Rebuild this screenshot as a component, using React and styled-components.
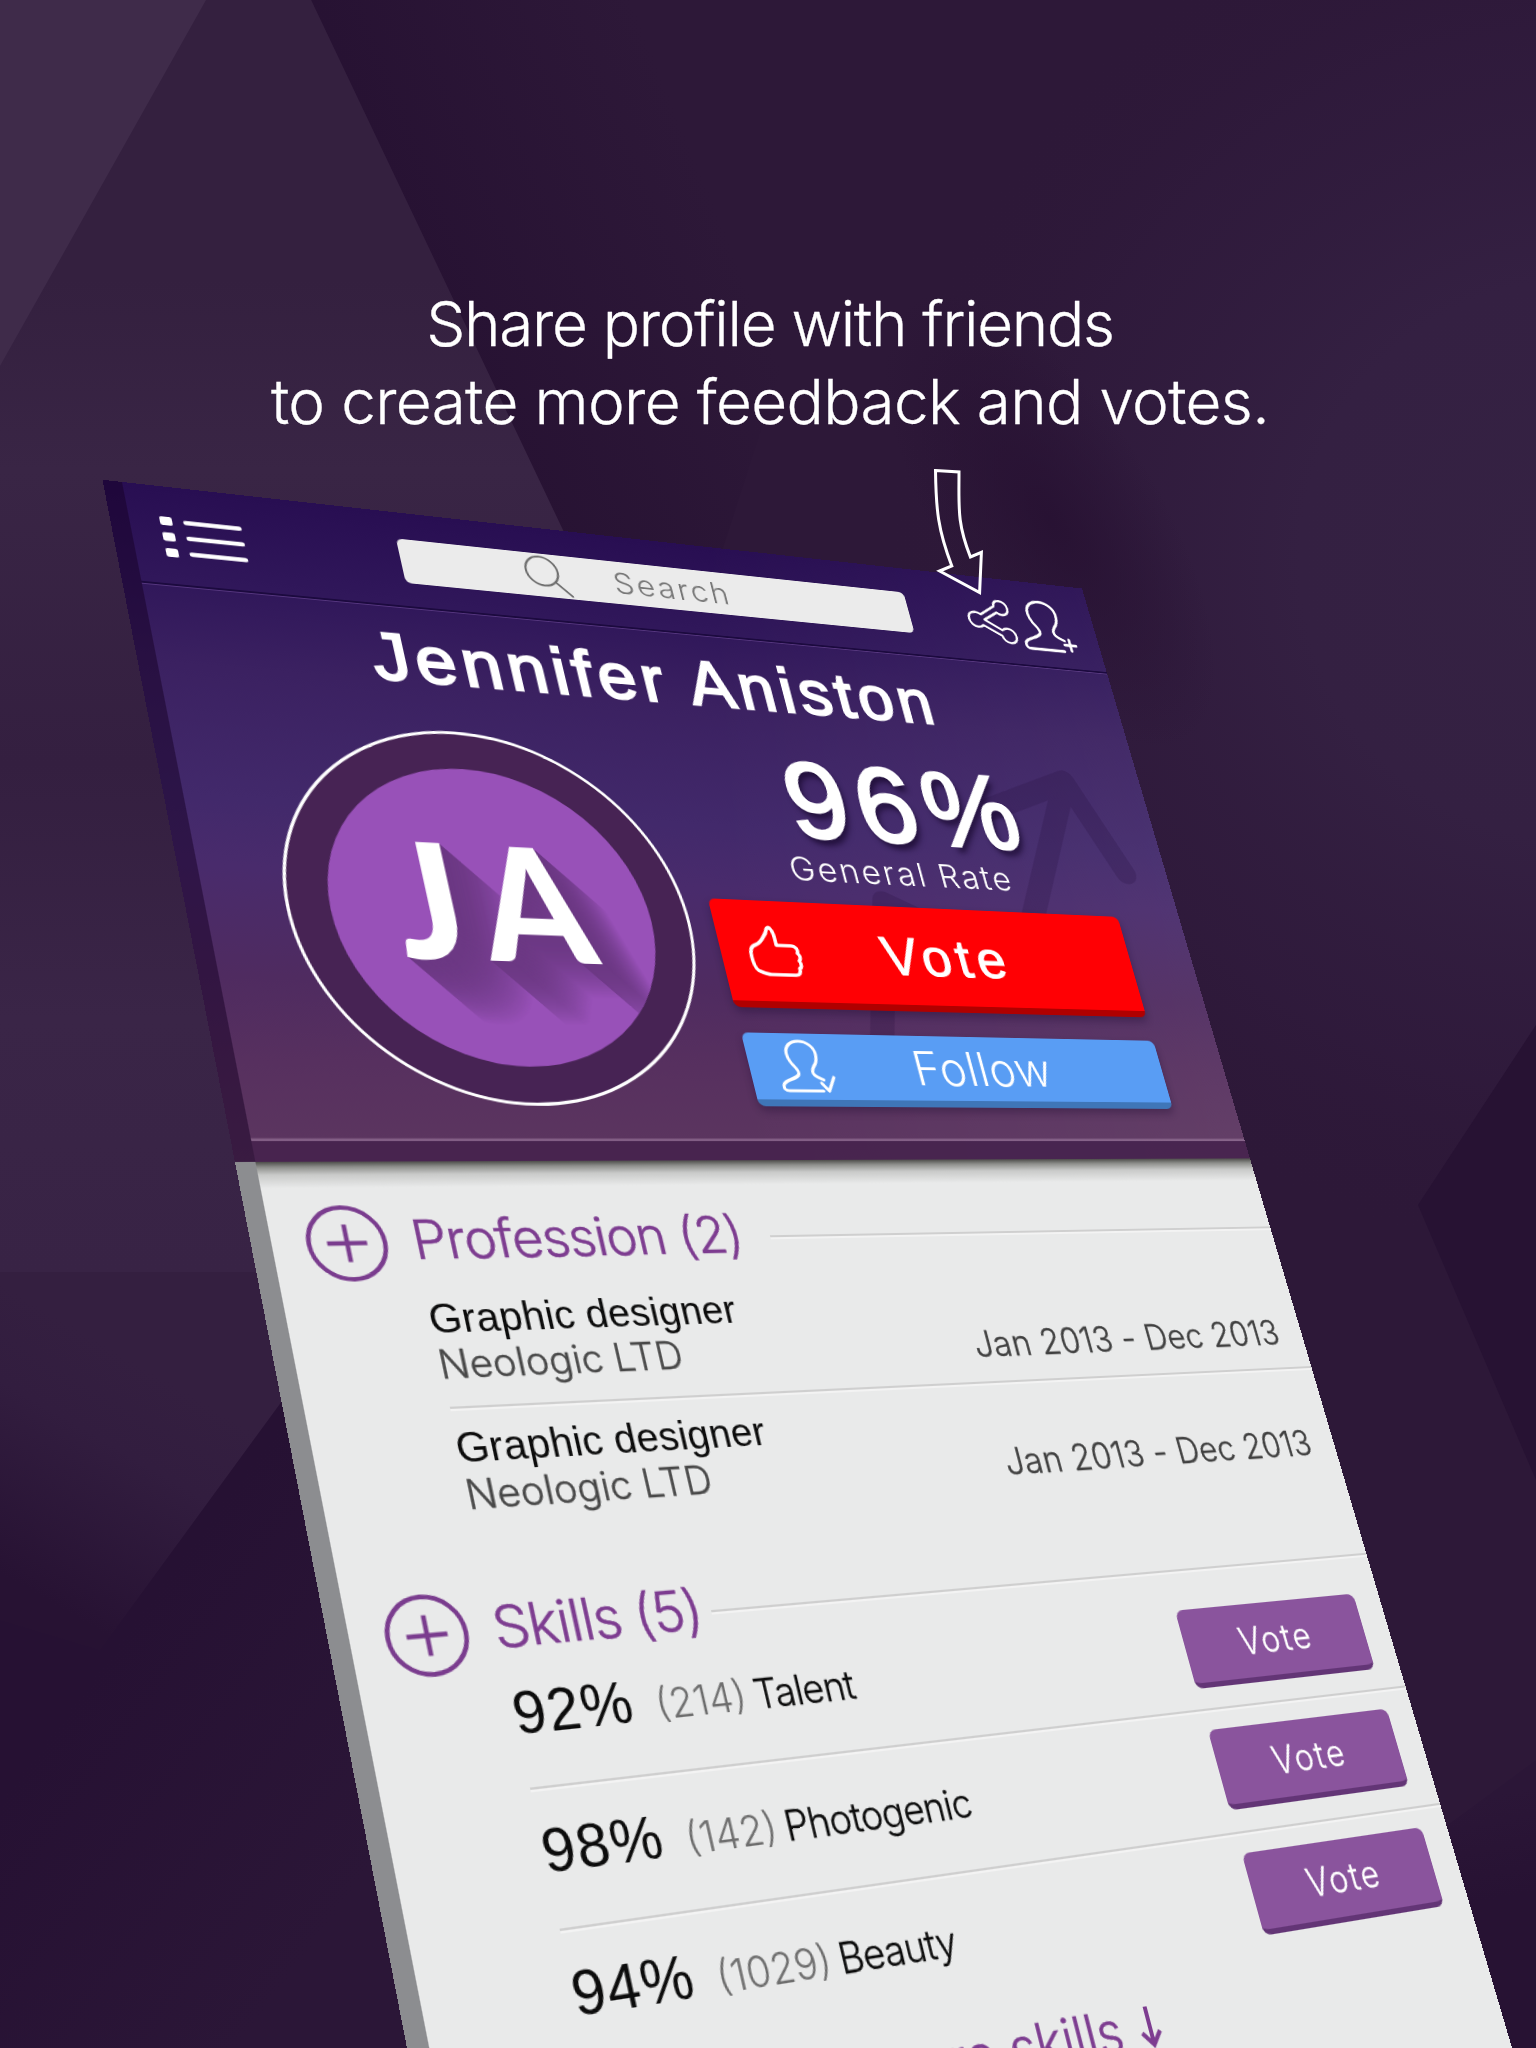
import React from 'react';
import styled, { createGlobalStyle, css } from 'styled-components';

const GlobalStyle = createGlobalStyle`
  *, *::before, *::after { box-sizing: border-box; }
  body { margin: 0; background: #2d1838; }
`;

const regular = css`
  font-family: "Liberation Sans", Arial, sans-serif;
  font-weight: 400;
`;
const light = css`
  font-family: Inter, "Liberation Sans", sans-serif;
  font-weight: 300;
`;

/* Projects a flat w x h sheet on to four corners: TL, TR, BR, BL. */
function project(w, h, [p0, p1, p2, p3]) {
  const dx1 = p1[0] - p2[0];
  const dx2 = p3[0] - p2[0];
  const dx3 = p0[0] - p1[0] + p2[0] - p3[0];
  const dy1 = p1[1] - p2[1];
  const dy2 = p3[1] - p2[1];
  const dy3 = p0[1] - p1[1] + p2[1] - p3[1];
  const den = dx1 * dy2 - dx2 * dy1;
  const g = (dx3 * dy2 - dx2 * dy3) / den;
  const k = (dx1 * dy3 - dx3 * dy1) / den;
  const m = [
    (p1[0] - p0[0] + g * p1[0]) / w, (p1[1] - p0[1] + g * p1[1]) / w, 0, g / w,
    (p3[0] - p0[0] + k * p3[0]) / h, (p3[1] - p0[1] + k * p3[1]) / h, 0, k / h,
    0, 0, 1, 0,
    p0[0], p0[1], 0, 1,
  ];
  return `matrix3d(${m.map((n) => n.toFixed(9)).join(',')})`;
}

const EDGE = 17;
const SHEET = project(1000, 1591, [[122, 482], [1082, 588.5], [1522.5, 2083.5], [478.7, 2300]]);

const longShadow = (steps) =>
  Array.from({ length: steps }, (_, i) => {
    const t = i / steps;
    const mix = (a, b) => Math.round(a + (b - a) * t * t);
    return `${i + 1}px ${i + 1}px 0 rgb(${mix(108, 152)},${mix(56, 81)},${mix(132, 184)})`;
  }).join(',');

const Stage = styled.main`
  width: 1536px;
  height: 2048px;
  overflow: hidden;
  display: grid;
  grid-template: 2048px / 1536px;
  & > * { grid-area: 1 / 1; }
`;

const Backdrop = styled.svg`
  display: block;
  width: 1536px;
  height: 2048px;
`;

const Promo = styled.div`
  z-index: 2;
  padding: 285px 0 0 4px;
`;

const Headline = styled.h1`
  ${light}
  margin: 0;
  color: #fff;
  font-size: 62px;
  line-height: 78px;
  text-align: center;
  -webkit-text-stroke: 0.3px #fff;
`;

const HeadlineRow = styled.span`
  display: block;
  letter-spacing: ${(p) => p.$ls}px;
`;

const Pointer = styled.svg`
  display: block;
  width: 56px;
  height: 134px;
  margin: 24px 0 0 926px;
`;

const Sheet = styled.section`
  z-index: 1;
  width: ${1000 + EDGE}px;
  height: 1591px;
  transform-origin: 0 0;
  transform: ${SHEET} translateX(-${EDGE}px);
`;

const Header = styled.header`
  position: relative;
  height: 662px;
  border-left: ${EDGE}px solid rgba(22, 0, 36, 0.5);
  box-shadow:
    inset 0 -19px 0 rgba(64, 28, 72, 0.88),
    inset 0 -21.5px 0 rgba(255, 225, 255, 0.24);
  background:
    linear-gradient(100deg, rgba(255, 255, 255, 0) 50%, rgba(255, 255, 255, 0.05) 100%) border-box,
    linear-gradient(180deg, #280e52 0, #30175a 15%, #3b2161 28%, #42296b 48%, #492b6c 58%, #4f2b60 74%, #57305f 86%, #5c365f 100%) border-box;
`;

const Trend = styled.svg`
  position: absolute;
  left: 590px;
  top: 215px;
  width: 400px;
  height: 340px;
`;

const NavBar = styled.nav`
  height: 104px;
  padding: 3px 0 0 27px;
  display: flex;
  align-items: center;
  border-bottom: 2px solid #1c0a3f;
  box-shadow: 0 1px 0 rgba(130, 90, 170, 0.45);
`;

const Icon = styled.svg`
  display: block;
  flex: none;
  width: ${(p) => p.$w}px;
  height: ${(p) => p.$h}px;
  margin-left: ${(p) => p.$ml || 0}px;
  fill: none;
  stroke: ${(p) => p.$color || '#fff'};
  stroke-width: ${(p) => p.$stroke || 0};
  stroke-linecap: round;
  stroke-linejoin: round;
  overflow: visible;
`;

const SearchBox = styled.div`
  width: 533px;
  height: 48px;
  margin-left: 145px;
  padding-left: 121px;
  display: flex;
  align-items: center;
  border-radius: 6px;
  background: #ebebeb;
`;

const SearchText = styled.span`
  ${light}
  margin-left: 45px;
  color: #777;
  font-size: 33px;
  line-height: 40px;
  letter-spacing: 2.6px;
`;

const Name = styled.h2`
  ${regular}
  margin: 15px 0 0 197px;
  color: #fff;
  font-size: 70px;
  line-height: 80px;
  letter-spacing: 5.3px;
  white-space: nowrap;
  -webkit-text-stroke: 2.4px #fff;
`;

const Hero = styled.div`
  position: relative;
  display: flex;
  padding: 23px 0 0 70px;
`;

const Avatar = styled.div`
  flex: none;
  width: 379px;
  height: 376px;
  margin-top: 11px;
  display: flex;
  align-items: center;
  justify-content: center;
  border: 3px solid #fff;
  border-radius: 50%;
  background: #472354;
`;

const Disc = styled.div`
  width: 301px;
  height: 299px;
  padding: 0 0 33px 15px;
  overflow: hidden;
  display: flex;
  align-items: center;
  justify-content: center;
  border-radius: 50%;
  background: #9851b8;
`;

const Monogram = styled.span`
  color: #fff;
  font-family: Lato, sans-serif;
  font-weight: 900;
  font-size: 161px;
  line-height: 1;
  letter-spacing: 18px;
  transform: scaleX(0.92);
  text-shadow: ${longShadow(62)};
`;

const Stats = styled.div`
  width: 452px;
  margin-left: 24px;
`;

const Rate = styled.div`
  ${regular}
  padding-left: 109px;
  color: #fff;
  font-size: 118px;
  line-height: 118px;
  letter-spacing: 10px;
  white-space: nowrap;
  -webkit-text-stroke: 3.2px #fff;
  text-shadow: 3px 7px 6px rgba(20, 5, 40, 0.75);
`;

const RateLabel = styled.div`
  ${light}
  padding-left: 94px;
  margin: -5px 0 15px;
  color: #fff;
  font-size: 36px;
  line-height: 44px;
  letter-spacing: 2.6px;
  white-space: nowrap;
`;

const Action = styled.button`
  width: 452px;
  height: ${(p) => p.$h}px;
  margin: 0 0 26px;
  padding: 0 0 0 29px;
  display: flex;
  align-items: center;
  border: 0;
  border-bottom: 7px solid ${(p) => p.$edge};
  border-radius: 7px;
  background: ${(p) => p.$fill};
  box-shadow: 0 5px 9px rgba(20, 5, 40, 0.3);
  color: #fff;
`;

const VoteLabel = styled.span`
  ${regular}
  margin-left: 88px;
  font-size: 58px;
  letter-spacing: 6.3px;
  -webkit-text-stroke: 1.2px #fff;
`;

const FollowLabel = styled.span`
  ${light}
  margin-left: 86px;
  font-size: 49px;
  letter-spacing: 0.8px;
`;

const Body = styled.div`
  height: 929px;
  padding-top: 39.5px;
  border-left: ${EDGE}px solid #8c8d90;
  background: linear-gradient(180deg, #4d4d4a 0, #8f908d 5px, #c9cac9 12px, #e9eaea 24px) border-box;
  background-color: #e9eaea;
`;

const SectionHead = styled.div`
  height: 70px;
  margin: ${(p) => p.$mt || 0}px 0 ${(p) => p.$mb || 0}px;
  padding-left: 29px;
  display: flex;
  align-items: center;
`;

const Title = styled.h3`
  ${light}
  margin: 0 0 0 21.5px;
  padding-bottom: 4px;
  color: #7d3c90;
  font-size: 49px;
  line-height: 56px;
  letter-spacing: -1px;
  white-space: nowrap;
  -webkit-text-stroke: 0.5px #7d3c90;
`;

const Rule = styled.div`
  flex: 1;
  height: 2px;
  margin-left: ${(p) => p.$ml}px;
  background: #cfcfcf;
  box-shadow: 0 2px 0 #f3f3f3;
`;

const divider = css`
  border-bottom: ${(p) => (p.$last ? 0 : 2)}px solid #cfcfcf;
  box-shadow: ${(p) => (p.$last ? 'none' : '0 2px 0 #f3f3f3')};
`;

const JobRow = styled.div`
  height: 115px;
  margin-left: 122px;
  padding: 14.5px 27px 0 0;
  display: flex;
  justify-content: space-between;
  align-items: flex-start;
  ${divider}
`;

const JobText = styled.div`
  margin-left: -2px;
`;

const JobTitle = styled.div`
  ${regular}
  color: #0c0c0c;
  font-size: 36.5px;
  line-height: 41px;
  letter-spacing: 0.2px;
`;

const Company = styled.div`
  ${light}
  color: #484848;
  font-size: 35px;
  line-height: 41px;
  letter-spacing: 0.1px;
  -webkit-text-stroke: 0.4px #484848;
`;

const Period = styled.div`
  ${light}
  align-self: flex-start;
  margin-top: 42px;
  color: #404040;
  font-size: 35px;
  line-height: 41px;
  letter-spacing: 0.3px;
  white-space: nowrap;
  -webkit-text-stroke: 0.4px #404040;
`;

const SkillRow = styled.div`
  height: 114.5px;
  margin-left: 122px;
  padding-right: 29px;
  display: flex;
  justify-content: space-between;
  align-items: flex-start;
  ${divider}
`;

const SkillText = styled.div`
  display: flex;
  align-items: baseline;
  margin-left: -1px;
  padding-top: 21px;
  line-height: 60px;
  white-space: nowrap;
`;

const Percent = styled.span`
  ${regular}
  min-width: 123px;
  color: #0c0c0c;
  font-size: 50px;
  letter-spacing: 1.2px;
`;

const Count = styled.span`
  ${light}
  color: #6e6e6e;
  font-size: 35px;
`;

const SkillName = styled.span`
  ${light}
  margin-left: 7.5px;
  color: #0c0c0c;
  font-size: 35px;
  letter-spacing: -0.7px;
  -webkit-text-stroke: 0.3px #0c0c0c;
`;

const SmallVote = styled.button`
  ${light}
  width: 203px;
  height: 75px;
  margin-top: 18px;
  padding: 0;
  border: 0;
  border-bottom: 5px solid #633576;
  border-radius: 8px;
  background: #8a549d;
  color: #fff;
  font-size: 35px;
  letter-spacing: 2.3px;
  -webkit-text-stroke: 0.3px #fff;
`;

const More = styled.div`
  ${light}
  margin-top: 9px;
  padding-right: 3px;
  display: flex;
  justify-content: center;
  align-items: center;
  color: #7d3c90;
  font-size: 49px;
  line-height: 60px;
  -webkit-text-stroke: 0.5px #7d3c90;
`;

const PERSON = 'M41 52H6C2 52 1 50 1.5 47C2.5 41 14 41 19 36C21 34 20 31 17 27C13 22 12 18 12 14C12 6 19 1 27 1C36 1 42 7 42 14C42 19 40 24 37 27C34 31 34 34 36 36C38 38 41 39 44 40.5';

const PlusCircle = () => (
  <Icon $w={69} $h={69} viewBox="0 0 67 67" $color="#7a3c8e" $stroke={3.8}>
    <circle cx="33.5" cy="33.5" r="31.5" />
    <path d="M33.5 17V50M17 33.5H50" strokeLinecap="butt" />
  </Icon>
);

const jobs = [
  { title: 'Graphic designer', company: 'Neologic LTD', period: 'Jan 2013 - Dec 2013' },
  { title: 'Graphic designer', company: 'Neologic LTD', period: 'Jan 2013 - Dec 2013' },
];

const skills = [
  { rate: '92%', votes: '(214)', name: 'Talent' },
  { rate: '98%', votes: '(142)', name: 'Photogenic' },
  { rate: '94%', votes: '(1029)', name: 'Beauty' },
];

const Facets = () => (
  <Backdrop viewBox="0 0 1536 2048">
    <defs>
      <linearGradient id="dark" gradientUnits="userSpaceOnUse" x1="380" y1="300" x2="700" y2="170">
        <stop offset="0" stopColor="#261132" />
        <stop offset="1" stopColor="#2d1838" />
      </linearGradient>
      <radialGradient id="glow" gradientUnits="userSpaceOnUse" cx="1580" cy="560" r="700">
        <stop offset="0" stopColor="#352243" />
        <stop offset="0.4" stopColor="#342042" />
        <stop offset="0.75" stopColor="#301b3d" stopOpacity="0.7" />
        <stop offset="1" stopColor="#2d1838" stopOpacity="0" />
      </radialGradient>
      <radialGradient id="pit" gradientUnits="userSpaceOnUse" cx="0" cy="0" r="1" gradientTransform="translate(1050 520) rotate(58) scale(260 110)">
        <stop offset="0" stopColor="#271132" stopOpacity="0.9" />
        <stop offset="1" stopColor="#271132" stopOpacity="0" />
      </radialGradient>
      <linearGradient id="left" gradientUnits="userSpaceOnUse" x1="0" y1="0" x2="0" y2="1272">
        <stop offset="0" stopColor="#34203f" />
        <stop offset="0.22" stopColor="#34203f" />
        <stop offset="0.37" stopColor="#392545" />
        <stop offset="0.6" stopColor="#341f40" />
        <stop offset="0.8" stopColor="#3a2547" />
        <stop offset="1" stopColor="#382345" />
      </linearGradient>
      <linearGradient id="low" gradientUnits="userSpaceOnUse" x1="200" y1="1400" x2="60" y2="1640">
        <stop offset="0" stopColor="#341f40" />
        <stop offset="0.3" stopColor="#321d3f" />
        <stop offset="0.9" stopColor="#271233" />
      </linearGradient>
      <linearGradient id="bottom" gradientUnits="userSpaceOnUse" x1="150" y1="1600" x2="420" y2="1800">
        <stop offset="0" stopColor="#261133" />
        <stop offset="1" stopColor="#2b1637" />
      </linearGradient>
      <linearGradient id="corner" gradientUnits="userSpaceOnUse" x1="1470" y1="1800" x2="1490" y2="1900">
        <stop offset="0" stopColor="#2b1637" />
        <stop offset="1" stopColor="#271233" />
      </linearGradient>
    </defs>
    <rect width="1536" height="2048" fill="#2d1838" />
    <polygon points="311,0 900,0 700,620 590,587" fill="url(#dark)" />
    <rect x="860" width="676" height="1300" fill="url(#glow)" />
    <rect x="760" y="220" width="600" height="640" fill="url(#pit)" />
    <polygon points="1536,1025 1418,1205 1536,1480" fill="#271233" />
    <polygon points="1536,1760 1400,1860 1440,2048 1536,2048" fill="url(#corner)" />
    <polygon points="0,0 311,0 590,587 590,1272 0,1272" fill="url(#left)" />
    <polygon points="0,0 206,0 0,366" fill="#3f2b4a" />
    <polygon points="0,1272 420,1272 420,2048 0,2048" fill="url(#bottom)" />
    <polygon points="0,1272 380,1272 282,1401 100,1650 0,1620" fill="url(#low)" />
  </Backdrop>
);

export default function App() {
  return (
    <>
      <GlobalStyle />
      <Stage>
        <Facets />
        <Promo>
          <Headline>
            <HeadlineRow $ls={-1.3}>Share profile with friends</HeadlineRow>
            <HeadlineRow $ls={-0.65}>to create more feedback and votes.</HeadlineRow>
          </Headline>
          <Pointer viewBox="930 465 56 134" fill="none" stroke="#fff" strokeWidth="3">
            <path d="M935.5 470.5L959 472C959 508 957 523 970.4 557L981.4 552.3L979.6 592.5L939.6 571L951.8 566C938 530 936 510 935.5 470.5Z" />
          </Pointer>
        </Promo>
        <Sheet>
          <Header>
            <Trend viewBox="0 0 400 340" fill="none" stroke="#240c3c" strokeOpacity="0.22" strokeWidth="25" strokeLinecap="round" strokeLinejoin="round">
              <path d="M28 325L70 175L205 240L318 24M222 62L318 24L360 128" />
            </Trend>
            <NavBar>
              <Icon $w={73} $h={42} viewBox="0 0 73 42" $stroke={4.4}>
                <path d="M23 4.5H71M23 21H71M23 37.5H71" />
                <g fill="#fff" stroke="none">
                  <rect x="0" y="0" width="11" height="9" rx="2" />
                  <rect x="0" y="16.5" width="11" height="9" rx="2" />
                  <rect x="0" y="33" width="11" height="9" rx="2" />
                </g>
              </Icon>
              <SearchBox>
                <Icon $w={45} $h={42} viewBox="0 0 45 42" $color="#6d6d6d" $stroke={2.2}>
                  <circle cx="18" cy="16.5" r="16" />
                  <path d="M30 28L44 42" />
                </Icon>
                <SearchText>Search</SearchText>
              </SearchBox>
              <Icon $w={55} $h={53} $ml={69} viewBox="0 0 56 54" $stroke={2.8}>
                <path d="M35.600 8.500C36 3.500 39.500 1.300 43.500 1.300C48.500 1.300 52 5 52 10C52 15 48.500 18.500 43.500 18.500C41 18.500 39 17.500 37.500 16L20 26.500L38.500 37.500C40.500 35.800 42.500 35 45 35C50.500 35 54 39 54 44C54 49 50.500 52.700 45.500 52.700C40.500 52.700 36.800 49 36.800 44.500L17 33.500C15 35 13 36 10.500 36C5 36 1.300 32 1.300 27C1.300 21.500 5 18 10.500 18C13 18 15 18.800 17 20.300Z" />
              </Icon>
              <Icon $w={65} $h={62} $ml={6} viewBox="0 0 57 54" $stroke={2.9}>
                <path d={PERSON} />
                <path d="M49 39V51M43 45H55" />
              </Icon>
            </NavBar>
            <Name>Jennifer Aniston</Name>
            <Hero>
              <Avatar>
                <Disc>
                  <Monogram>JA</Monogram>
                </Disc>
              </Avatar>
              <Stats>
                <Rate>96%</Rate>
                <RateLabel>General Rate</RateLabel>
                <Action $h={113} $fill="#ff0004" $edge="#b00000">
                  <Icon $w={53} $h={53} viewBox="0 0 53 53" $stroke={3.7}>
                    <path d="M27 1.500C31 6 30 13 30 20H45C50 20 52 24 50 28C53 30 52 34 50 36C52 39 51 43 48.500 44C49 48 47 51 43 51H18C12 51 9 49 5 47C2 44 1.500 39 1.500 33C1.500 26 3 22 9 20C15 18 18 12 22 7C23 4 24 1 27 1.500Z" />
                  </Icon>
                  <VoteLabel>Vote</VoteLabel>
                </Action>
                <Action $h={75} $fill="#599df4" $edge="#3f76b8">
                  <Icon $w={56} $h={54} viewBox="0 0 56 54" $stroke={3.2}>
                    <path d={PERSON} />
                    <path d="M41 44L47 52L55 38" />
                  </Icon>
                  <FollowLabel>Follow</FollowLabel>
                </Action>
              </Stats>
            </Hero>
          </Header>
          <Body>
            <SectionHead>
              <PlusCircle />
              <Title>Profession (2)</Title>
              <Rule $ml={28} />
            </SectionHead>
            {jobs.map((job, i) => (
              <JobRow key={i} $last={i === jobs.length - 1}>
                <JobText>
                  <JobTitle>{job.title}</JobTitle>
                  <Company>{job.company}</Company>
                </JobText>
                <Period>{job.period}</Period>
              </JobRow>
            ))}
            <SectionHead $mt={42} $mb={-15}>
              <PlusCircle />
              <Title>Skills (5)</Title>
              <Rule $ml={9} />
            </SectionHead>
            {skills.map((skill, i) => (
              <SkillRow key={skill.name} $last={i === skills.length - 1}>
                <SkillText>
                  <Percent>{skill.rate}</Percent>
                  <Count>{skill.votes}</Count>
                  <SkillName>{skill.name}</SkillName>
                </SkillText>
                <SmallVote>Vote</SmallVote>
              </SkillRow>
            ))}
            <More>
              more skills
              <Icon $w={22} $h={36} $ml={17} viewBox="0 0 22 36" $color="#7d3c90" $stroke={4}>
                <path d="M11 1V34M2 23L11 34L20 23" strokeLinecap="butt" strokeLinejoin="miter" />
              </Icon>
            </More>
          </Body>
        </Sheet>
      </Stage>
    </>
  );
}
